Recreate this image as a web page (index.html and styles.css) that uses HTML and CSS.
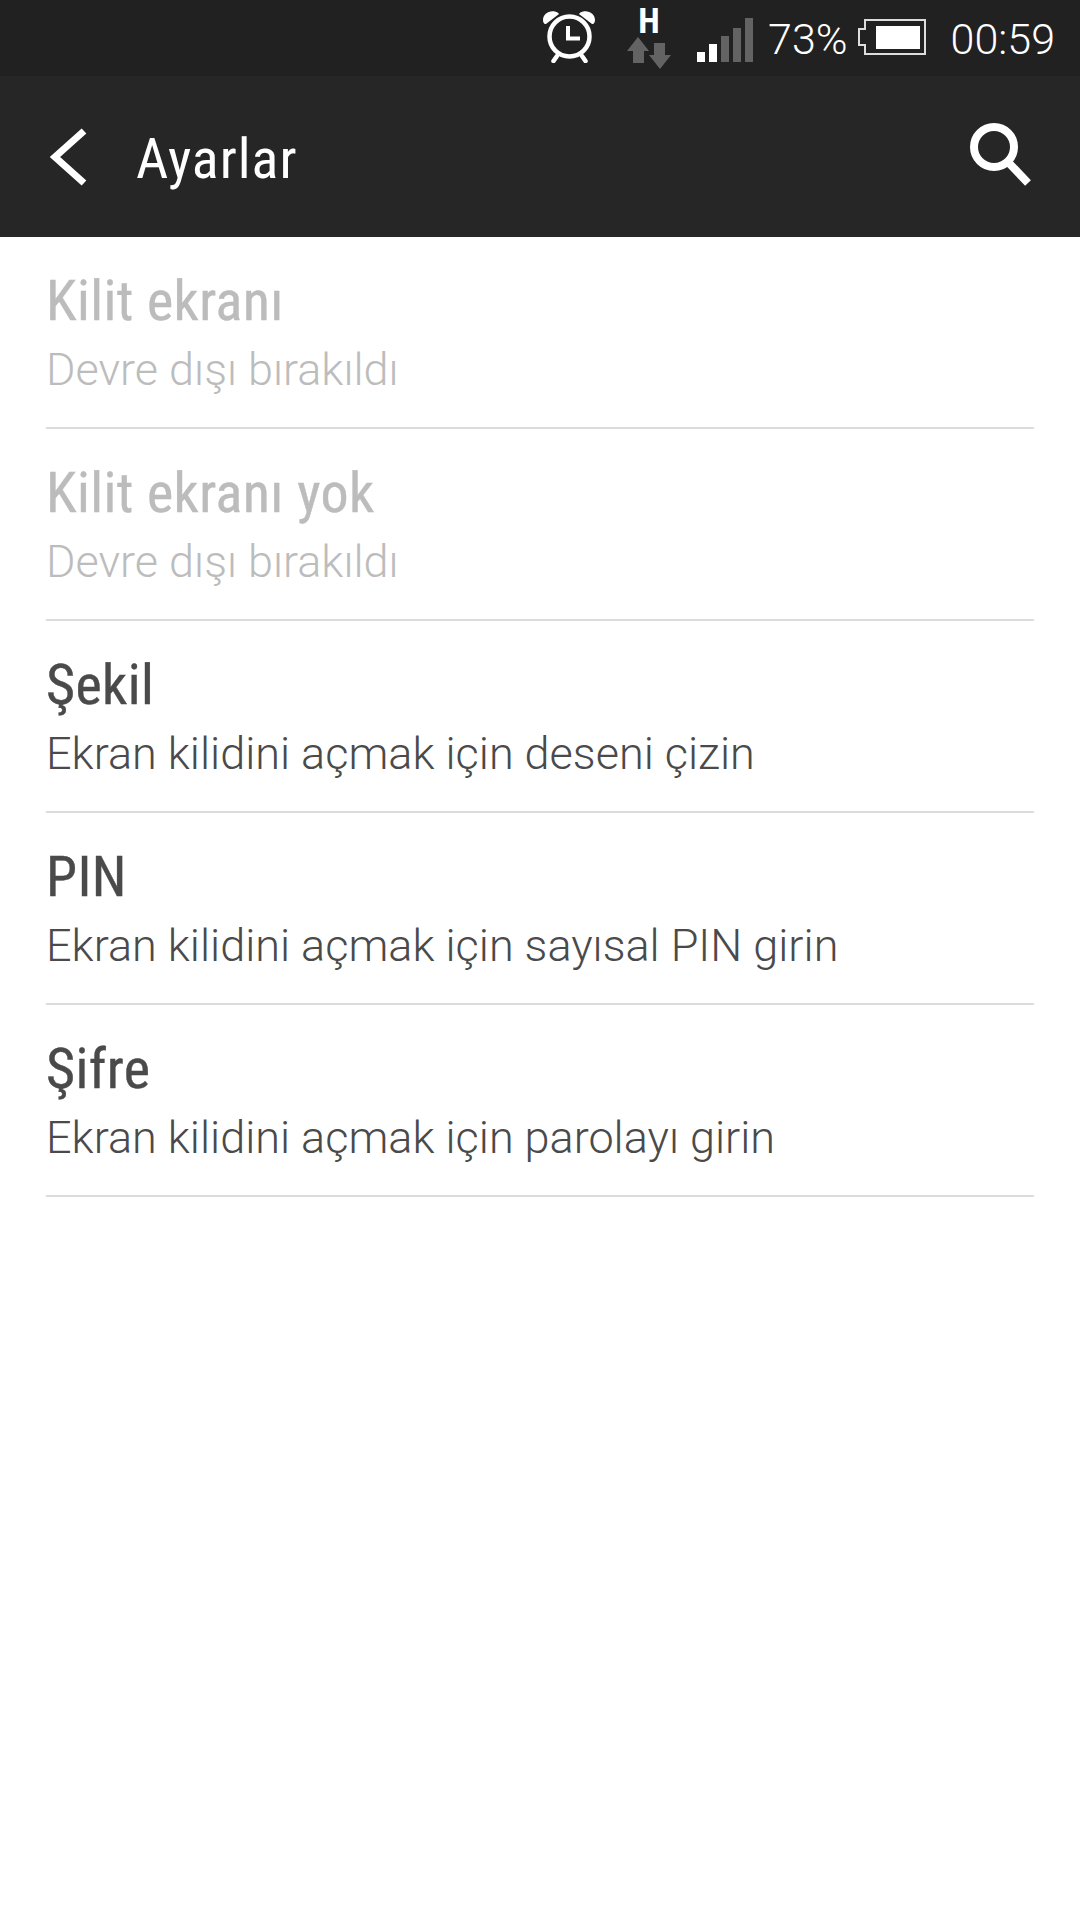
FILE: index.html
```html
<!DOCTYPE html>
<html lang="tr">
<head>
  <meta charset="UTF-8" />
  <title>Ayarlar</title>
  <link rel="stylesheet" href="styles.css">
</head>
<body>
  <div class="status-bar">
    <svg class="ic-alarm" width="52" height="52" viewBox="0 0 52 52">
      <circle cx="26.500" cy="25.500" r="20" fill="none" stroke="#fff" stroke-width="4.500"/>
      <path d="M25 15V27.500H37" fill="none" stroke="#fff" stroke-width="4"/>
      <path d="M0 9C0 3 6 -1 12 0.500C14 1 15.500 2 16 3L3 13C1 13.500 0 11 0 9ZM52 9C52 3 46 -1 40 0.500C38 1 36.500 2 36 3L49 13C51 13.500 52 11 52 9Z" fill="#fff"/>
      <path d="M14 45L10.500 50M39 45L42.500 50" stroke="#fff" stroke-width="4.500" stroke-linecap="round"/>
    </svg>
    <div class="net">
      <span class="net-h">H</span>
      <svg width="44" height="32" viewBox="0 0 44 32">
        <path d="M0 14L11 0 22 14H17V26H6V14ZM27 6H38V18H44L33 32 22 18H27Z" fill="#636363"/>
      </svg>
    </div>
    <svg class="ic-signal" width="56" height="44" viewBox="0 0 56 44">
      <rect x="0" y="34" width="8" height="10" fill="#fff"/>
      <rect x="12" y="26" width="8" height="18" fill="#fff"/>
      <rect x="24" y="18" width="8" height="26" fill="#636363"/>
      <rect x="36" y="10" width="8" height="34" fill="#636363"/>
      <rect x="48" y="0" width="8" height="44" fill="#636363"/>
    </svg>
    <span class="pct">73%</span>
    <svg class="ic-batt" width="68" height="36" viewBox="0 0 68 36">
      <path d="M7 1H67V35H7V26H1V10H7Z" fill="none" stroke="#ddd" stroke-width="2"/>
      <rect x="18" y="7" width="44" height="23" fill="#fff"/>
    </svg>
    <span class="clock">00:59</span>
  </div>

  <header class="app-bar">
    <svg class="ic-back" width="40" height="60" viewBox="0 0 40 60">
      <path d="M36 4L7 30 36 56" fill="none" stroke="#fff" stroke-width="7"/>
    </svg>
    <h1 class="app-title">Ayarlar</h1>
    <svg class="ic-search" width="64" height="64" viewBox="0 0 64 64">
      <circle cx="26" cy="24" r="20" fill="none" stroke="#fff" stroke-width="8"/>
      <path d="M40 39L60 60" fill="none" stroke="#fff" stroke-width="8"/>
    </svg>
  </header>

  <ul class="list">
    <li class="row off">
      <div class="row-title">Kilit ekranı</div>
      <div class="row-sub">Devre dışı bırakıldı</div>
    </li>
    <li class="row off">
      <div class="row-title">Kilit ekranı yok</div>
      <div class="row-sub">Devre dışı bırakıldı</div>
    </li>
    <li class="row">
      <div class="row-title">Şekil</div>
      <div class="row-sub">Ekran kilidini açmak için deseni çizin</div>
    </li>
    <li class="row">
      <div class="row-title">PIN</div>
      <div class="row-sub">Ekran kilidini açmak için sayısal PIN girin</div>
    </li>
    <li class="row">
      <div class="row-title">Şifre</div>
      <div class="row-sub">Ekran kilidini açmak için parolayı girin</div>
    </li>
  </ul>
</body>
</html>
```

FILE: styles.css
```css
body {
  margin: 0;
  width: 1080px;
  height: 1920px;
  background: #fff;
  font-family: Roboto, "Noto Sans", sans-serif;
  overflow: hidden;
}

.status-bar {
  height: 76px;
  background: #212121;
  color: #fff;
  display: flex;
  align-items: center;
  justify-content: flex-end;
  padding-right: 25px;
}

.ic-alarm { margin-right: 32px; margin-top: -2px; }

.net {
  width: 44px;
  margin-right: 26px;
  display: flex;
  flex-direction: column;
  align-items: center;
}

.net-h {
  font-size: 35px;
  font-weight: 700;
  font-stretch: 75%;
  line-height: 25px;
  margin-top: 1px;
  margin-bottom: 3px;
}

.ic-signal { margin-right: 15px; margin-top: 4px; }

.pct {
  font-size: 43px;
  font-weight: 300;
  margin-top: 2px;
  margin-right: 10px;
}

.ic-batt { margin-right: 25px; margin-top: -2px; }

.clock {
  font-size: 43px;
  font-weight: 300;
  margin-top: 2px;
}

.app-bar {
  height: 161px;
  background: #262626;
  display: flex;
  align-items: center;
  padding: 0 48px;
}

.app-title {
  flex: 1;
  margin: 4px 0 0 48px;
  font-size: 56px;
  font-weight: 400;
  font-stretch: 80%;
  letter-spacing: 1px;
  color: #fff;
}

.ic-search { margin-top: -3px; }

.list {
  list-style: none;
  margin: 0 46px;
  padding: 0;
}

.row {
  height: 190px;
  border-bottom: 2px solid #dcdcdc;
  color: #4a4a4a;
}

.row-title {
  padding-top: 32px;
  font-size: 56px;
  line-height: 64px;
  font-weight: 400;
  font-stretch: 80%;
  letter-spacing: 0.4px;
  -webkit-text-stroke: 0.4px currentColor;
}

.row-sub {
  margin-top: 8px;
  font-size: 45px;
  line-height: 58px;
  font-weight: 300;
}

.off { color: #bcbcbc; }
```
